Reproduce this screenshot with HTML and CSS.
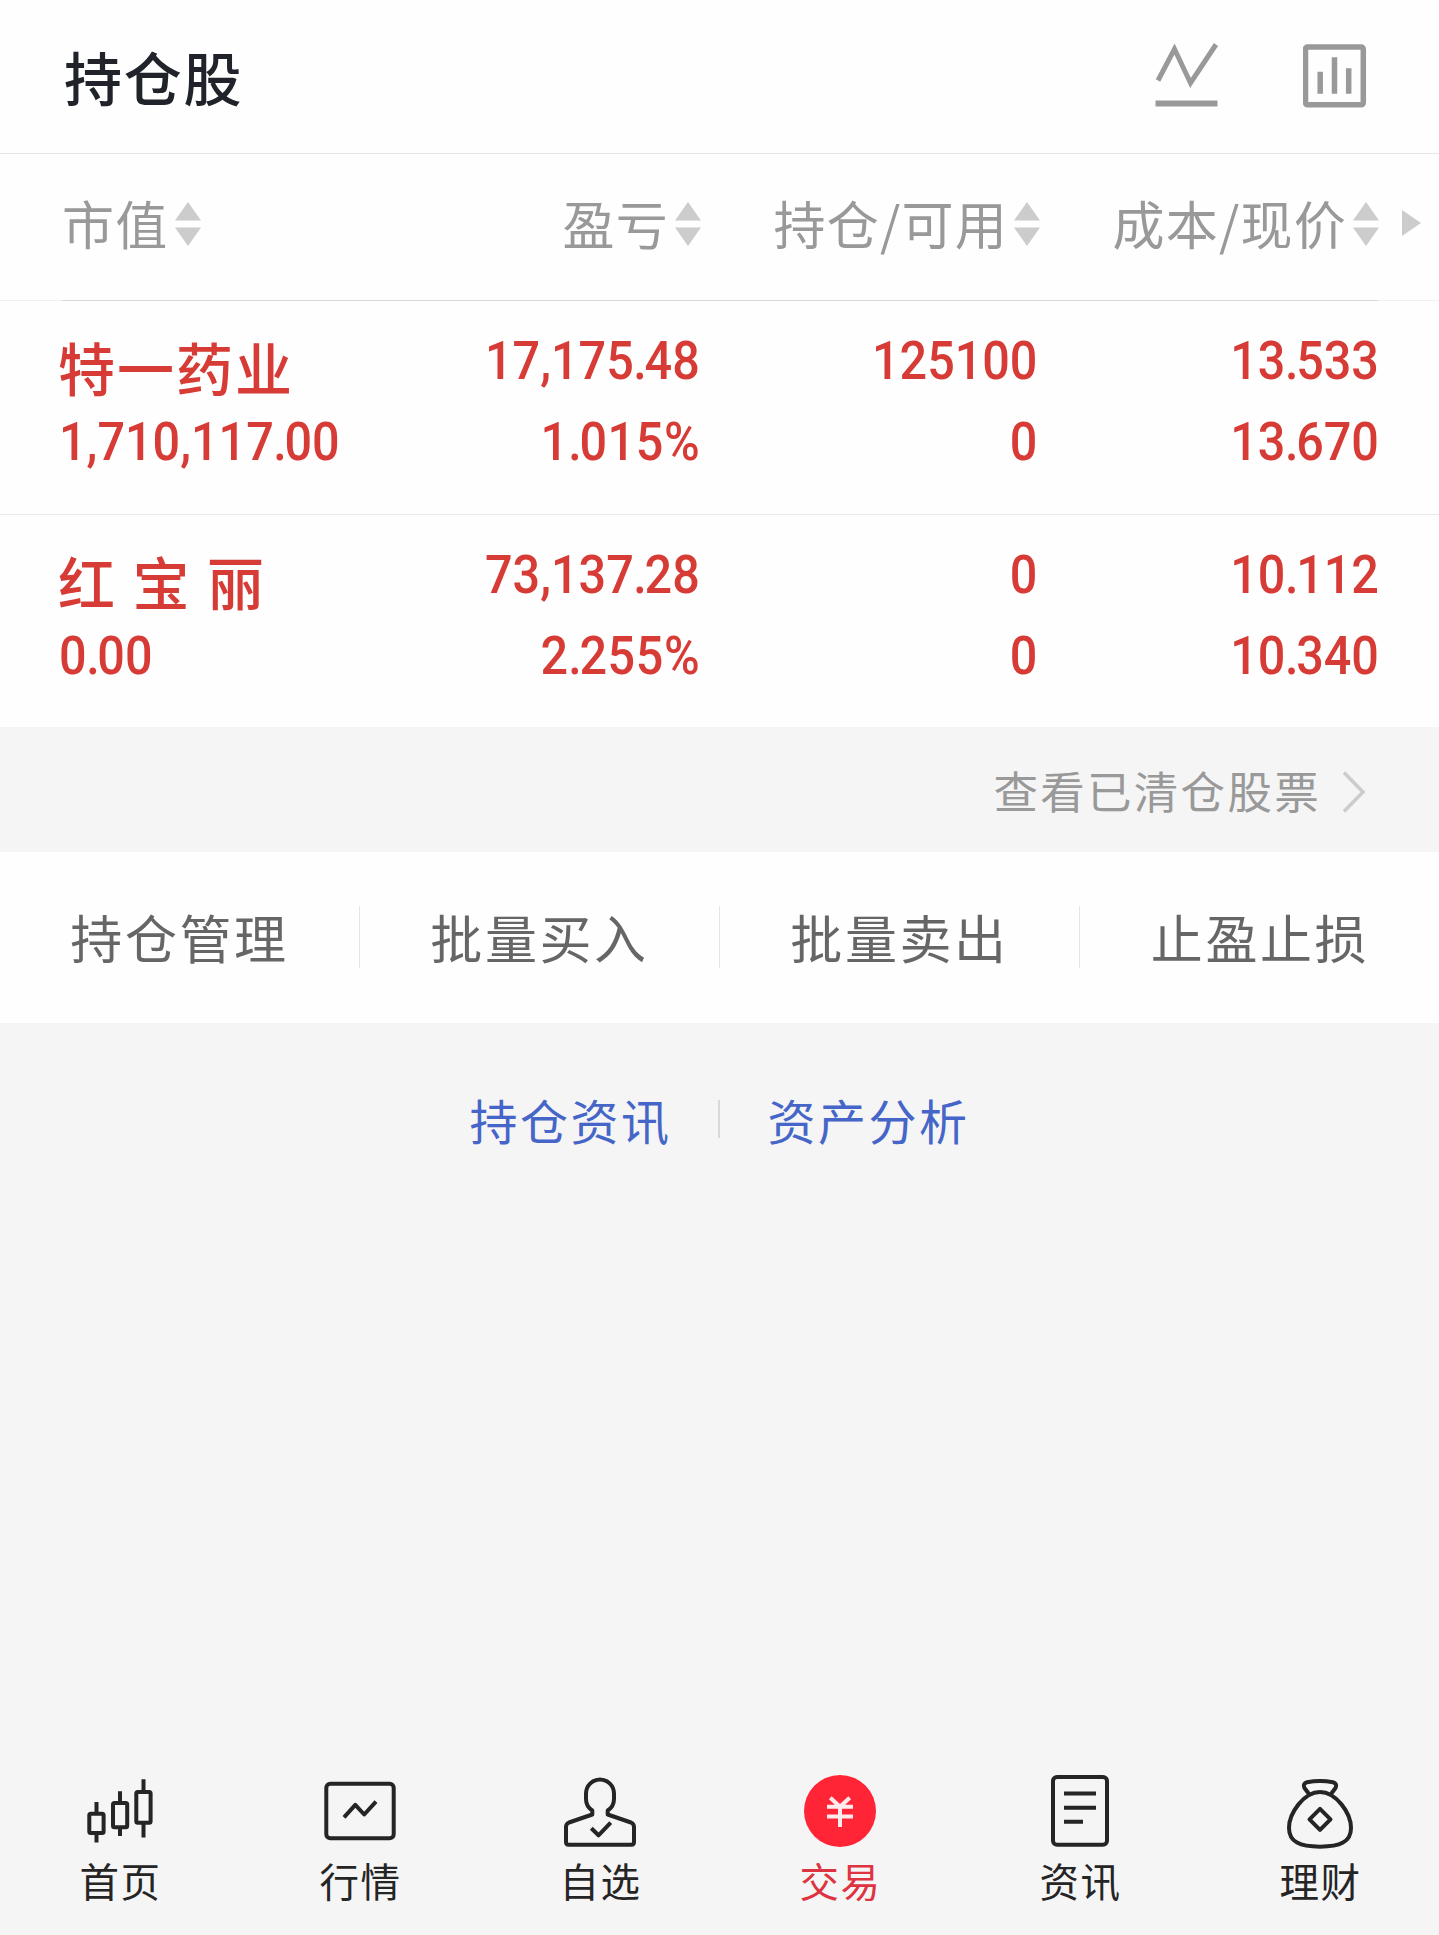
FILE: index.html
```html
<!DOCTYPE html>
<html lang="zh-CN">
<head>
<meta charset="utf-8">
<title>持仓股</title>
<link rel="stylesheet" href="styles.css">
</head>
<body>
<div class="app">
  <header class="top">
    <h1 class="title">持仓股</h1>
    <div class="tools">
      <svg class="tool" viewBox="0 0 64 66"><path d="M3 37.500 19.500 6 35.500 40 61 1.500" fill="none" stroke="#999" stroke-width="5"/><path d="M.500 60.500h62" stroke="#999" stroke-width="6"/></svg>
      <svg class="tool" viewBox="0 0 64 66"><rect x="2.500" y="4" width="57.800" height="57.800" rx="2" fill="none" stroke="#999" stroke-width="5.500"/><path d="M17.200 28.700v22M31.500 14.200v36.500M45.700 25.200v25.500" stroke="#999" stroke-width="5.500"/></svg>
    </div>
  </header>

  <div class="cols head">
    <div class="th">市值<svg class="sort" viewBox="0 0 26 44"><path d="M13 0 26 18.500H0zM0 25.500H26L13 44z"/></svg></div>
    <div class="th">盈亏<svg class="sort" viewBox="0 0 26 44"><path d="M13 0 26 18.500H0zM0 25.500H26L13 44z"/></svg></div>
    <div class="th">持仓/可用<svg class="sort" viewBox="0 0 26 44"><path d="M13 0 26 18.500H0zM0 25.500H26L13 44z"/></svg></div>
    <div class="th">成本/现价<svg class="sort" viewBox="0 0 26 44"><path d="M13 0 26 18.500H0zM0 25.500H26L13 44z"/></svg></div>
    <svg class="more" viewBox="0 0 19 26"><path d="M0 0 19 13 0 26z"/></svg>
  </div>
  <div class="rule"></div>

  <div class="cols stock">
    <div class="cell"><span class="name">特一药业</span><span class="num">1,710,117<i class="dot">.</i>00</span></div>
    <div class="cell"><span class="num">17,175<i class="dot">.</i>48</span><span class="num pct">1<i class="dot">.</i>015%</span></div>
    <div class="cell"><span class="num">125100</span><span class="num">0</span></div>
    <div class="cell"><span class="num">13<i class="dot">.</i>533</span><span class="num">13<i class="dot">.</i>670</span></div>
  </div>
  <div class="cols stock second">
    <div class="cell"><span class="name spaced">红宝丽</span><span class="num">0<i class="dot">.</i>00</span></div>
    <div class="cell"><span class="num">73,137<i class="dot">.</i>28</span><span class="num pct">2<i class="dot">.</i>255%</span></div>
    <div class="cell"><span class="num">0</span><span class="num">0</span></div>
    <div class="cell"><span class="num">10<i class="dot">.</i>112</span><span class="num">10<i class="dot">.</i>340</span></div>
  </div>

  <div class="cleared">查看已清仓股票<svg class="chevron" viewBox="0 0 24 42"><path d="M2 1.500 21 21 2 40.500" fill="none" stroke="#ccc" stroke-width="3.500"/></svg></div>

  <div class="actions">
    <div class="action">持仓管理</div>
    <div class="action">批量买入</div>
    <div class="action">批量卖出</div>
    <div class="action">止盈止损</div>
  </div>

  <div class="links"><a class="link">持仓资讯</a><i class="bar"></i><a class="link">资产分析</a></div>

  <nav class="tabs">
    <div class="tab"><svg class="icon" viewBox="0 0 76 76"><rect x="7.300" y="40.700" width="14.300" height="19.300" rx="1.500"/><path d="M14.500 29v11M14.500 60v9.600M38 18.300v11M38 55v8M61.500 6.300v12M61.500 50v14.500"/><rect x="31" y="30" width="14.200" height="24.300" rx="1.500"/><rect x="54.300" y="19" width="14.300" height="30.700" rx="1.500"/></svg><span>首页</span></div>
    <div class="tab"><svg class="icon" viewBox="0 0 76 76"><rect x="4.300" y="10.700" width="67.400" height="54.600" rx="4"/><path d="M22 44.300 33.300 31.800 42.200 41.500 54 28.700"/></svg><span>行情</span></div>
    <div class="tab"><svg class="icon" viewBox="0 0 76 76"><path d="M30.300 41.500V37.500C26.500 35 24 31 24 26V20.500a14 14 0 0 1 28 0V26c0 5-2.500 9-6.300 11.500V41.500L69 49.500q3 1.200 3 4.500V69q0 2.700-2.700 2.700H6.700Q4 71.700 4 69V54q0-3.300 3-4.500z"/><path d="M29.300 55.300 36.500 62.300 48.700 49.700"/></svg><span>自选</span></div>
    <div class="tab active"><svg class="icon" viewBox="0 0 76 76"><circle cx="38" cy="38" r="36" fill="#ff2436" stroke="none"/><path d="M28.300 24.700 38 33.700 47.700 24.700M25 33.700H51M25 43.400H51M38 33.700V54" stroke="#fdeaec"/></svg><span>交易</span></div>
    <div class="tab"><svg class="icon" viewBox="0 0 76 76"><rect x="11" y="4" width="54" height="67.700" rx="4"/><path d="M22 20.400H54M22 34.700H54M22 48.800H41"/></svg><span>资讯</span></div>
    <div class="tab"><svg class="icon" viewBox="0 0 76 76"><path d="M27 21 22.500 15Q20.500 10.500 25 9.300 38 6.700 51 9.300 55.500 10.500 53.500 15L49 21"/><path d="M38 19C22 19 7 40 7 55 7 69 18 73.700 38 73.700S69 69 69 55C69 40 54 19 38 19z"/><path d="M38 35.800 48.500 46.300 38 56.800 27.500 46.300z"/></svg><span>理财</span></div>
  </nav>
</div>
</body>
</html>
```

FILE: styles.css
```css
* { box-sizing: border-box; }
body {
  margin: 0;
  background: #f5f5f5;
  font-family: "Noto Sans CJK SC", sans-serif;
}
.app {
  width: 1439px;
  height: 1935px;
  display: flex;
  flex-direction: column;
}
.top {
  height: 154px;
  padding: 0 72px 4px 64px;
  background: #fefefe;
  border-bottom: 1px solid #e6e6e6;
  display: flex;
  align-items: center;
  justify-content: space-between;
}
.title {
  margin: 3px 0 0;
  font-size: 58px;
  font-weight: 500;
  line-height: 80px;
  letter-spacing: 1.700px;
  color: #20242a;
}
.tools { display: flex; gap: 84px; }
.tool { width: 64px; height: 66px; margin-top: 3px; }
.cols {
  display: grid;
  grid-template-columns: 339px 301px 339px 339px 1fr;
  padding-left: 61px;
  background: #fefefe;
}
.head {
  height: 146px;
  padding-top: 28px;
  color: #999;
  font-size: 52px;
  line-height: 82px;
  letter-spacing: 1.200px;
}
.th {
  display: flex;
  justify-content: flex-end;
  height: 80px;
  white-space: nowrap;
}
.th:first-child { justify-content: flex-start; padding-left: 1px; }
.sort { width: 26px; height: 44px; margin: 20px 0 0 6px; fill: #ccc; }
.th:first-child .sort { margin-left: 7px; }
.more { width: 19px; height: 26px; margin: 28px 0 0 23px; fill: #ccc; }
.rule {
  height: 1px;
  padding: 0 61px 0 62px;
  background: #f0f0f0;
}
.rule::before { content: ""; display: block; height: 1px; background: #d8d8d8; }
.stock {
  height: 214px;
  padding-top: 19px;
  border-bottom: 1px solid #e9e9e9;
  color: #d63b36;
}
.second { height: 212px; border-bottom: 0; }
.cell {
  display: flex;
  flex-direction: column;
  align-items: flex-end;
  padding-right: 1px;
}
.cell:nth-child(3) { padding-right: 3px; }
.cell:nth-child(4) { padding-right: 0; }
.cell:first-child { align-items: flex-start; padding: 0; }
.name {
  height: 81px;
  padding-top: 6px;
  margin-left: -3px;
  font-size: 57px;
  font-weight: 500;
  line-height: 80px;
  letter-spacing: 2px;
}
.spaced { letter-spacing: 17.500px; }
.num {
  height: 81px;
  font: 500 53.500px/81px Roboto, sans-serif;
  transform: scaleX(0.907);
  transform-origin: right;
}
.pct { letter-spacing: 0.700px; }
.dot { font-style: normal; margin-left: -0.500px; letter-spacing: -2.500px; }
.cell:first-child .num { transform-origin: left; margin-left: -2px; }
.cleared {
  height: 125px;
  padding-right: 73px;
  display: flex;
  align-items: center;
  justify-content: flex-end;
  color: #999;
  font-size: 44.500px;
  line-height: 60px;
  letter-spacing: 2.300px;
}
.chevron { width: 24px; height: 42px; margin: 5px 0 0 21px; }
.actions {
  height: 171px;
  background: #fefefe;
  display: grid;
  grid-template-columns: repeat(4, 360px);
  align-content: center;
}
.action {
  height: 62px;
  margin-top: -2px;
  text-align: center;
  color: #666;
  font-size: 52px;
  line-height: 62px;
  letter-spacing: 2.600px;
}
.action:not(:last-child) { border-right: 1px solid #e6e6e6; }
.links {
  height: 192px;
  display: flex;
  align-items: center;
  justify-content: center;
  gap: 48px;
  color: #4566c8;
  font-size: 48px;
  line-height: 70px;
  letter-spacing: 2.500px;
}
.bar { width: 2px; height: 38px; margin-left: -2px; background: #d8d8d8; }
.tabs {
  margin-top: auto;
  height: 162px;
  display: grid;
  grid-template-columns: repeat(6, 240px);
}
.tab {
  display: flex;
  flex-direction: column;
  align-items: center;
  color: #252525;
  font-size: 39.500px;
  line-height: 62px;
  letter-spacing: 1.500px;
}
.tab span { padding-left: 1px; }
.icon {
  width: 76px;
  height: 76px;
  fill: none;
  stroke: #252525;
  stroke-width: 4;
  stroke-linejoin: round;
}
.active { color: #de3341; }
```
